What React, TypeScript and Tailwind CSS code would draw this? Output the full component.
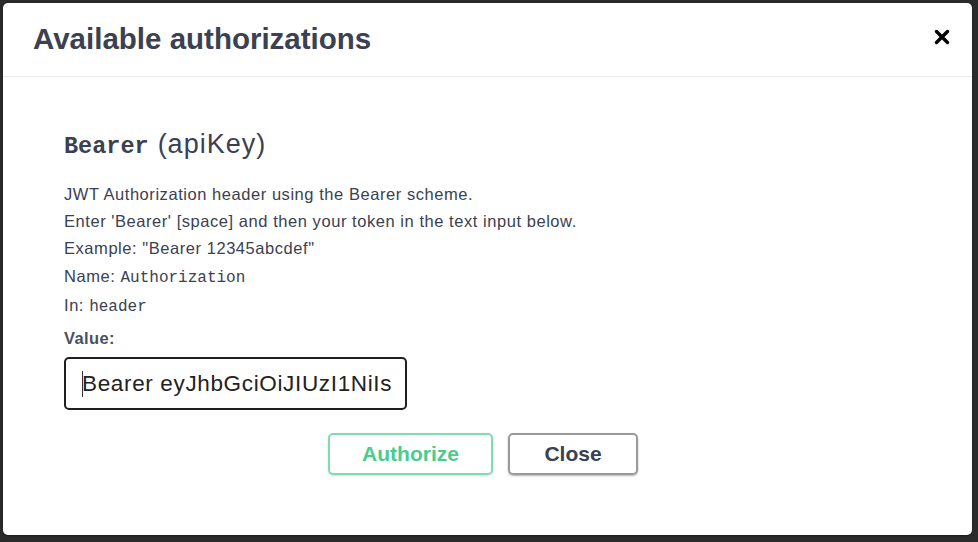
import React from 'react';

const sans = { fontFamily: '"Liberation Sans", Arial, sans-serif' };
const mono = { fontFamily: '"Liberation Mono", "DejaVu Sans Mono", monospace' };

const CloseIcon: React.FC = () => (
  <svg width="16" height="16" viewBox="0 0 16 16" aria-hidden="true">
    <path d="M2.5 2.5 L13.5 13.5 M13.5 2.5 L2.5 13.5" stroke="#000" strokeWidth="3.4" strokeLinecap="round" />
  </svg>
);

const App: React.FC = () => {
  return (
    <div className="w-[978px] h-[542px] bg-[#2b2b2b] pt-[3px] pl-[3px]" style={sans}>
      <div className="w-[969px] h-[532px] bg-white rounded-[5px] shadow-[0_1px_2px_rgba(0,0,0,0.4)] flex flex-col">
        <div className="h-[74px] border-b border-[#ececec] flex items-center justify-between pl-[30px] pr-[22px]">
          <h3 className="text-[29.5px] font-bold text-[#3b4151] leading-none pb-[2px]">Available authorizations</h3>
          <button className="w-[16px] h-[16px] flex items-center justify-center mb-[6px]">
            <CloseIcon />
          </button>
        </div>

        <div className="pl-[61px] pt-[51px] text-[#3b4151]">
          <h4 className="flex items-baseline gap-[9px] h-[32px] leading-[32px]">
            <span className="text-[23.5px] font-bold" style={mono}>Bearer</span>
            <span className="text-[27px] tracking-[1px]">(apiKey)</span>
          </h4>

          <div className="mt-[21px] text-[16.5px] tracking-[0.55px] text-[#3b4151]">
            <p className="h-[26px] leading-[26px]">JWT Authorization header using the Bearer scheme.</p>
            <p className="h-[28px] leading-[28px]">Enter 'Bearer' [space] and then your token in the text input below.</p>
            <p className="h-[27px] leading-[27px]">Example: "Bearer 12345abcdef"</p>
            <p className="h-[29px] leading-[29px]">
              Name: <span className="text-[16px] tracking-normal" style={mono}>Authorization</span>
            </p>
            <p className="h-[29px] leading-[29px]">
              In: <span className="text-[16px] tracking-normal" style={mono}>header</span>
            </p>
          </div>

          <label className="block mt-[8px] text-[16.5px] tracking-[0.4px] font-bold leading-[20px] text-[#4a5060]">Value:</label>

          <div className="mt-[9px] w-[343px] h-[53px] border-2 border-[#1f1f1f] rounded-[5px] flex items-center pl-[16px]">
            <span className="w-[1px] h-[26px] bg-[#333] -mr-[1px]" />
            <span className="text-[22.5px] text-[#222] tracking-[0.65px]">Bearer eyJhbGciOiJIUzI1NiIs</span>
          </div>
        </div>

        <div className="mt-[23px] flex justify-center gap-[15px] pr-[9px]">
          <button className="w-[165px] h-[42px] border-2 border-[#7fdcb0] rounded-[5px] text-[21px] font-bold text-[#49cc90] shadow-[0_1px_2px_rgba(0,0,0,0.15)]">
            Authorize
          </button>
          <button className="w-[130px] h-[42px] border-2 border-[#9a9a9a] rounded-[5px] text-[21px] font-bold text-[#3b4151] shadow-[0_1px_2px_rgba(0,0,0,0.3)]">
            Close
          </button>
        </div>
      </div>
    </div>
  );
};

export default App;
